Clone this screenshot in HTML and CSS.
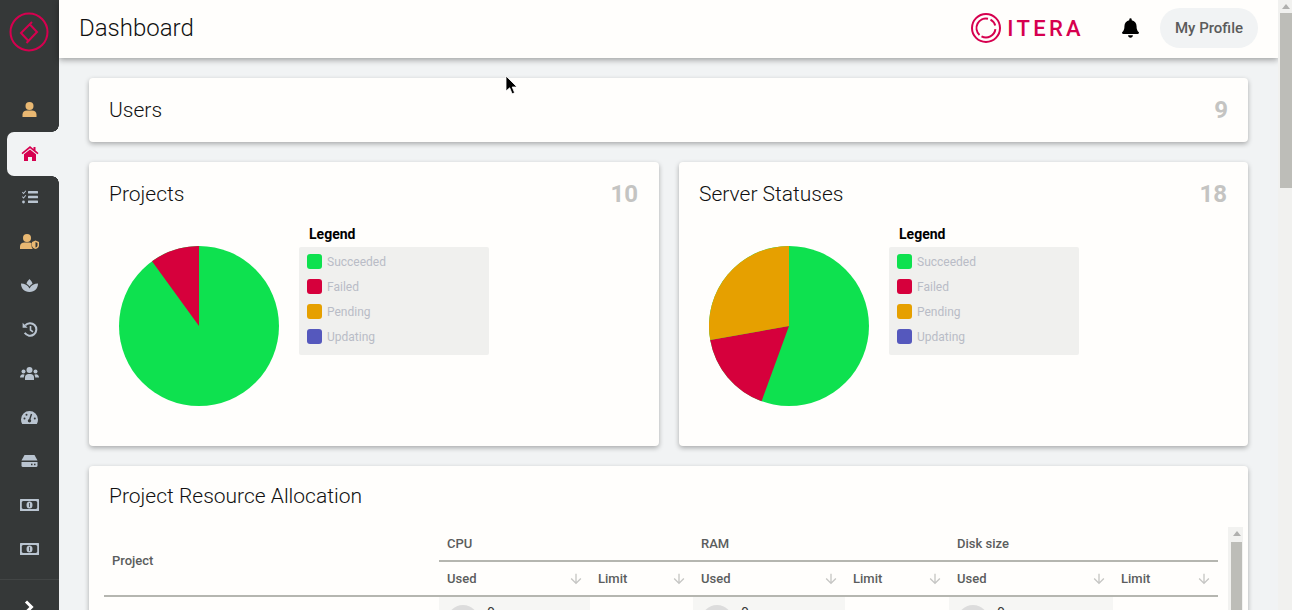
FILE: index.html
```html
<!DOCTYPE HTML>
<html>

<head>
  <meta charset="UTF-8"/>
  <title>Dashboard</title>
  <link rel="stylesheet" href="styles.css">
</head>

<body>
  <nav class="sidebar">
    <div class="side-logo">
      <svg width="40" height="40" viewBox="0 0 40 40" fill="none" stroke="#d6004f" stroke-width="2">
        <circle cx="20" cy="20" r="18.500"/>
        <path d="M23 10L12 21l7.500 8M17.500 31L28 20l-7.500-8"/>
      </svg>
    </div>
    <ul class="side-menu">
      <li class="side-item">
        <svg width="15" height="15" viewBox="0 0 15 15" fill="#e9b872"><circle cx="7.5" cy="4" r="4"/><path d="M0.5 15v-2.5C0.5 10 2.5 8.5 5 8.5h5c2.500 0 4.500 1.500 4.500 4V15z"/></svg>
      </li>
      <li class="side-item active">
        <svg width="18" height="15" viewBox="0 0 18 15" fill="#d6004f"><path d="M9 0L0.500 7l1 1.200L9 2.200l7.500 6 1-1.200-3-2.500V1h-2v1.900z"/><path d="M9 3.500L3 8.300V15h4v-4h4v4h4V8.300z"/></svg>
      </li>
      <li class="side-item">
        <svg width="16" height="14" viewBox="0 0 16 14" fill="#b9c4d0"><path d="M0.500 1.800l1 1 2-2.300.7.600L1.600 4.300 0 2.600zM0.500 6.300l1 1 2-2.300.7.600-2.600 3.200L0 7.100z"/><circle cx="1.500" cy="12" r="1.400"/><rect x="6" y="1" width="10" height="2.500" rx=".5"/><rect x="6" y="5.700" width="10" height="2.500" rx=".5"/><rect x="6" y="10.500" width="10" height="2.500" rx=".5"/></svg>
      </li>
      <li class="side-item">
        <svg width="19" height="15" viewBox="0 0 19 15" fill="#e9b872"><circle cx="7" cy="4" r="4"/><path d="M0 15v-2.500C0 10 2 8.500 4.500 8.500h5c.8 0 1.500.2 2.100.5v3c0 1.200.5 2.300 1.400 3z"/><path d="M15.500 6.500L12 8v3.500c0 1.800 1.500 3 3.500 3.500 2-.5 3.500-1.700 3.500-3.500V8z"/><path d="M15.500 8v5.500c1.200-.4 2-1.200 2-2.300V8.900z" fill="#353838"/></svg>
      </li>
      <li class="side-item">
        <svg width="17" height="13" viewBox="0 0 17 13" fill="#b9c4d0"><path d="M8.500 0C7 1.500 5.800 3.200 5.500 4.700 6.800 5.400 7.800 6.300 8.500 7.400 9.200 6.300 10.200 5.400 11.500 4.700 11.200 3.200 10 1.500 8.500 0z"/><path d="M0 4.500c0 4.500 3 8.500 8.500 8.500S17 9 17 4.500c-3.500 0-7 1.800-8.500 5C7 6.300 3.500 4.500 0 4.500z"/></svg>
      </li>
      <li class="side-item">
        <svg width="16" height="15" viewBox="0 0 16 15" fill="none" stroke="#b9c4d0" stroke-width="2"><path d="M3.200 3.400A6.300 6.300 0 1 1 2.700 10.800"/><path d="M8.500 4v4l2.500 1.800" stroke-width="1.600"/><path d="M0.600 0.800l0 5 5 0z" fill="#b9c4d0" stroke="none"/></svg>
      </li>
      <li class="side-item">
        <svg width="19" height="13" viewBox="0 0 19 13" fill="#b9c4d0"><circle cx="9.500" cy="3" r="3"/><circle cx="3.500" cy="4.500" r="2"/><circle cx="15.500" cy="4.500" r="2"/><path d="M5 13v-2.500C5 8.500 6.500 7 8.500 7h2c2 0 3.500 1.500 3.500 3.500V13z"/><path d="M0 10.500C0 8.500 1.200 7.200 3 7.200c.7 0 1.300.2 1.700.5C4 8.500 3.800 9.500 3.800 10.500z"/><path d="M19 10.500c0-2-1.200-3.300-3-3.300-.7 0-1.300.2-1.700.5.7.8.900 1.800.900 2.800z"/></svg>
      </li>
      <li class="side-item">
        <svg width="17" height="13" viewBox="0 0 17 13"><path d="M8.500 0A8.500 8.500 0 0 0 0 8.500c0 1.700.4 3.200 1.200 4.500h14.600c.8-1.300 1.200-2.800 1.200-4.500A8.500 8.500 0 0 0 8.500 0z" fill="#b9c4d0"/><path d="M10.500 3L8.700 8.500" stroke="#353838" stroke-width="1.400"/><circle cx="8.500" cy="9.800" r="1.700" fill="#353838"/><circle cx="3.500" cy="7.500" r="1" fill="#353838"/><circle cx="5.500" cy="3.800" r="1" fill="#353838"/><circle cx="13.800" cy="7.500" r="1" fill="#353838"/></svg>
      </li>
      <li class="side-item">
        <svg width="17" height="12" viewBox="0 0 17 12" fill="#b9c4d0"><path d="M3.500 0h10l3 5.500H.5z"/><path d="M.5 7h16v3.500a1.500 1.500 0 0 1-1.500 1.500H2A1.500 1.500 0 0 1 .5 10.500z"/><rect x="10" y="8.700" width="1.500" height="1.500" fill="#353838"/><rect x="13" y="8.700" width="1.500" height="1.500" fill="#353838"/></svg>
      </li>
      <li class="side-item">
        <svg width="19" height="12" viewBox="0 0 19 12"><rect width="19" height="12" rx=".5" fill="#b9c4d0"/><path d="M2.800 2h13.400a2 2 0 0 0 1 1v6a2 2 0 0 0-1 1H2.800a2 2 0 0 0-1-1V3a2 2 0 0 0 1-1z" fill="#353838"/><ellipse cx="9.500" cy="6" rx="3" ry="3.600" fill="#b9c4d0"/><rect x="9.100" y="4" width=".8" height="4" fill="#353838"/></svg>
      </li>
      <li class="side-item">
        <svg width="19" height="12" viewBox="0 0 19 12"><rect width="19" height="12" rx=".5" fill="#b9c4d0"/><path d="M2.800 2h13.400a2 2 0 0 0 1 1v6a2 2 0 0 0-1 1H2.800a2 2 0 0 0-1-1V3a2 2 0 0 0 1-1z" fill="#353838"/><ellipse cx="9.500" cy="6" rx="3" ry="3.600" fill="#b9c4d0"/><rect x="9.100" y="4" width=".8" height="4" fill="#353838"/></svg>
      </li>
    </ul>
    <div class="side-toggle">
      <svg width="10" height="14" viewBox="0 0 10 14" fill="none" stroke="#fff" stroke-width="3"><path d="M2 1.500L7.500 7 2 12.500"/></svg>
    </div>
  </nav>

  <div class="content">
    <header class="topbar">
      <h1 class="page-title">Dashboard</h1>
      <div class="brand">
        <svg width="30" height="30" viewBox="0 0 30 30" fill="none" stroke="#d6004f" stroke-width="2">
          <circle cx="15" cy="15" r="14"/>
          <path d="M17 5.700A9.500 9.500 0 0 0 8.500 21.900"/>
          <path d="M10.500 23.400A9.500 9.500 0 0 0 24.400 16.200"/>
          <path d="M19.500 6.600A9.500 9.500 0 0 1 24.200 12.500"/>
        </svg>
        <span class="brand-name">ITERA</span>
      </div>
      <svg class="bell" width="17" height="20" viewBox="0 0 448 512" fill="#000"><path d="M224 512c35 0 64-29 64-64H160c0 35 29 64 64 64zm215-150c-19-21-55-52-55-154 0-78-54-140-128-155V32a32 32 0 0 0-64 0v21C118 68 64 130 64 208c0 102-36 133-55 154-6 6-9 14-9 22 0 16 13 32 32 32h384c19 0 32-16 32-32 0-8-3-16-9-22z"/></svg>
      <button class="profile-btn">My Profile</button>
    </header>

    <main class="main">
      <section class="card users-card">
        <h2 class="card-title">Users</h2>
        <span class="card-count">9</span>
      </section>

      <div class="chart-row">
        <section class="card chart-card">
          <div class="card-head">
            <h2 class="card-title">Projects</h2>
            <span class="card-count">10</span>
          </div>
          <div class="chart-body">
            <svg class="pie" width="160" height="160" viewBox="-80 -80 160 160">
              <circle r="80" fill="#0ee14f"/>
              <path d="M0 0L-47 -64.700A80 80 0 0 1 0 -80Z" fill="#d6003c"/>
            </svg>
            <div class="legend">
              <div class="legend-title">Legend</div>
              <ul class="legend-list">
                <li class="legend-item"><span class="swatch succeeded"></span>Succeeded</li>
                <li class="legend-item"><span class="swatch failed"></span>Failed</li>
                <li class="legend-item"><span class="swatch pending"></span>Pending</li>
                <li class="legend-item"><span class="swatch updating"></span>Updating</li>
              </ul>
            </div>
          </div>
        </section>

        <section class="card chart-card">
          <div class="card-head">
            <h2 class="card-title">Server Statuses</h2>
            <span class="card-count">18</span>
          </div>
          <div class="chart-body">
            <svg class="pie" width="160" height="160" viewBox="-80 -80 160 160">
              <circle r="80" fill="#0ee14f"/>
              <path d="M0 0L-27.400 75.200A80 80 0 0 1 -78.800 13.900Z" fill="#d6003c"/>
              <path d="M0 0L-78.800 13.900A80 80 0 0 1 0 -80Z" fill="#e6a000"/>
            </svg>
            <div class="legend">
              <div class="legend-title">Legend</div>
              <ul class="legend-list">
                <li class="legend-item"><span class="swatch succeeded"></span>Succeeded</li>
                <li class="legend-item"><span class="swatch failed"></span>Failed</li>
                <li class="legend-item"><span class="swatch pending"></span>Pending</li>
                <li class="legend-item"><span class="swatch updating"></span>Updating</li>
              </ul>
            </div>
          </div>
        </section>
      </div>

      <section class="card alloc-card">
        <h2 class="card-title">Project Resource Allocation</h2>
        <div class="table-wrap">
          <div class="alloc-table">
            <div class="th th-project">Project</div>
            <div class="th th-group g-cpu">CPU</div>
            <div class="th th-group g-ram">RAM</div>
            <div class="th th-group g-disk">Disk size</div>
            <div class="th th-sub">Used<svg class="sort" width="16" height="16" viewBox="0 0 24 24"><path d="M20 12l-1.410-1.410L13 16.170V4h-2v12.170l-5.580-5.590L4 12l8 8 8-8z"/></svg></div>
            <div class="th th-sub">Limit<svg class="sort" width="16" height="16" viewBox="0 0 24 24"><path d="M20 12l-1.410-1.410L13 16.170V4h-2v12.170l-5.580-5.590L4 12l8 8 8-8z"/></svg></div>
            <div class="th th-sub">Used<svg class="sort" width="16" height="16" viewBox="0 0 24 24"><path d="M20 12l-1.410-1.410L13 16.170V4h-2v12.170l-5.580-5.590L4 12l8 8 8-8z"/></svg></div>
            <div class="th th-sub">Limit<svg class="sort" width="16" height="16" viewBox="0 0 24 24"><path d="M20 12l-1.410-1.410L13 16.170V4h-2v12.170l-5.580-5.590L4 12l8 8 8-8z"/></svg></div>
            <div class="th th-sub">Used<svg class="sort" width="16" height="16" viewBox="0 0 24 24"><path d="M20 12l-1.410-1.410L13 16.170V4h-2v12.170l-5.580-5.590L4 12l8 8 8-8z"/></svg></div>
            <div class="th th-sub">Limit<svg class="sort" width="16" height="16" viewBox="0 0 24 24"><path d="M20 12l-1.410-1.410L13 16.170V4h-2v12.170l-5.580-5.590L4 12l8 8 8-8z"/></svg></div>
            <div class="td"></div>
            <div class="td used"><span class="gauge"></span>0</div>
            <div class="td"></div>
            <div class="td used"><span class="gauge"></span>0</div>
            <div class="td"></div>
            <div class="td used"><span class="gauge"></span>0</div>
            <div class="td"></div>
          </div>
          <div class="table-scroll"><span class="scroll-up small"></span><span class="scroll-thumb"></span></div>
        </div>
      </section>
    </main>

    <div class="page-scroll"><span class="scroll-up"></span><span class="scroll-thumb"></span></div>
  </div>

  <svg class="cursor" width="13" height="20" viewBox="0 0 13 20"><path d="M1 1v15l3.700-3.200 2.400 6 2.500-1L7.200 12H12z" fill="#000" stroke="#fff" stroke-width=".8"/></svg>
</body>

</html>
```

FILE: styles.css
```css
* {
  box-sizing: border-box;
}

html, body {
  height: 100%;
}

body {
  margin: 0;
  display: flex;
  height: 610px;
  overflow: hidden;
  background-color: #F1F3F4;
  color: #111;
  font-family: Roboto, "Liberation Sans", sans-serif;
}

h1, h2, ul {
  margin: 0;
  padding: 0;
  font-weight: 400;
}

ul {
  list-style: none;
}

/* sidebar */
.sidebar {
  width: 59px;
  flex: none;
  height: 610px;
  background-color: #353838;
  display: flex;
  flex-direction: column;
}

.side-logo {
  height: 88px;
  padding: 12px 0 0 9px;
}

.side-menu {
  flex: 1;
}

.side-item {
  height: 44px;
  display: flex;
  align-items: center;
  justify-content: center;
  margin-left: 7px;
  padding: 0 7px 2px 0;
}

.side-item.active {
  background-color: #F1F3F4;
  border-radius: 7px 0 0 7px;
  position: relative;
}

.side-item.active::before,
.side-item.active::after {
  content: "";
  position: absolute;
  right: 0;
  width: 7px;
  height: 7px;
}

.side-item.active::before {
  top: -7px;
  background: radial-gradient(circle at 0 0, #353838 6.500px, #F1F3F4 7px);
}

.side-item.active::after {
  bottom: -7px;
  background: radial-gradient(circle at 0 100%, #353838 6.500px, #F1F3F4 7px);
}

.side-toggle {
  height: 31px;
  border-top: 1px solid #424545;
  padding: 19px 0 0 24px;
}

/* top bar */
.content {
  flex: 1;
  min-width: 0;
  position: relative;
}

.topbar {
  height: 58px;
  margin-right: 14px;
  background-color: #FFFEFC;
  box-shadow: 0 2px 6px rgba(0, 0, 0, .35);
  display: flex;
  align-items: center;
  padding: 0 20px 2px 20px;
  position: relative;
}

.page-title {
  font-size: 24px;
  font-weight: 300;
  flex: 1;
}

.brand {
  display: flex;
  align-items: center;
  gap: 6px;
  margin-right: 38px;
}

.brand-name {
  color: #d6004f;
  font-size: 22px;
  font-weight: 500;
  letter-spacing: 3.300px;
}

.bell {
  margin-right: 21px;
}

.profile-btn {
  width: 98px;
  height: 40px;
  border: 0;
  border-radius: 20px;
  background-color: #F1F3F4;
  color: #5b5b5b;
  font: 500 15px Roboto, sans-serif;
}

/* cards */
.main {
  padding: 20px 44px 0 30px;
}

.card {
  background-color: #FFFEFC;
  border-radius: 4px;
  box-shadow: 0 2px 5px rgba(0, 0, 0, .3);
}

.card-title {
  font-size: 21px;
  font-weight: 300;
}

.card-count {
  font-size: 24px;
  font-weight: 700;
  color: #c4c4c2;
}

.users-card {
  height: 64px;
  display: flex;
  align-items: center;
  justify-content: space-between;
  padding: 0 20px;
}

.chart-row {
  display: grid;
  grid-template-columns: 570px 569px;
  gap: 20px;
  margin: 20px 0;
}

.chart-card {
  height: 284px;
  padding: 20px;
}

.card-head {
  display: flex;
  justify-content: space-between;
  align-items: center;
  height: 24px;
  padding-right: 1px;
}

.chart-body {
  display: flex;
  padding: 0 0 0 10px;
  margin-top: 16px;
  gap: 20px;
}

.pie {
  margin-top: 24px;
}

.legend {
  width: 190px;
}

.legend-title {
  font-size: 14px;
  font-weight: 700;
  color: #000;
  padding-left: 10px;
  height: 25px;
  line-height: 24px;
}

.legend-list {
  background-color: #F0F0EE;
  border-radius: 2px;
  height: 108px;
  padding: 2px 8px;
}

.legend-item {
  height: 25px;
  display: flex;
  align-items: center;
  gap: 5px;
  font-size: 12px;
  color: #b9bcc6;
}

.swatch {
  width: 15px;
  height: 15px;
  border-radius: 3px;
}

.succeeded { background-color: #0ee14f; }
.failed { background-color: #d6003c; }
.pending { background-color: #e6a000; }
.updating { background-color: #5558bd; }

/* table */
.alloc-card {
  height: 200px;
  padding: 18px 5px 0 15px;
}

.alloc-card .card-title {
  padding-left: 5px;
  height: 24px;
  line-height: 24px;
}

.table-wrap {
  display: flex;
  margin-top: 20px;
}

.alloc-table {
  width: 1114px;
  display: grid;
  grid-template-columns: 335px 151px 103px 152px 104px 164px 105px;
  grid-template-rows: 34px 35px 40px;
  font-size: 13px;
  color: #5b5d5d;
}

.th {
  font-weight: 500;
  display: flex;
  align-items: center;
  justify-content: space-between;
  padding: 0 8px;
}

.th-project {
  grid-row: 1 / 3;
  grid-column: 1;
  border-bottom: 2px solid #b5b6b0;
  padding-bottom: 2px;
}

.th-group {
  border-bottom: 2px solid #b5b6b0;
  padding-bottom: 2px;
}

.g-cpu { grid-column: 2 / 4; }
.g-ram { grid-column: 4 / 6; }
.g-disk { grid-column: 6 / 8; }

.th-sub {
  border-bottom: 2px solid #b5b6b0;
}

.sort {
  fill: #c6c6c4;
  flex: none;
  margin-right: -2px;
}

.td.used {
  background-color: #F6F6F4;
  padding: 8px 0 0 8px;
  display: flex;
  gap: 8px;
  font-size: 14px;
  color: #333;
}

.gauge {
  width: 32px;
  height: 32px;
  border-radius: 50%;
  background-color: #dcdcdc;
  flex: none;
}

.table-scroll {
  width: 15px;
  margin-left: 10px;
  background-color: #F2F2F0;
  margin-top: -1px;
  padding: 0 1px 0 3px;
}

.page-scroll {
  position: absolute;
  top: 0;
  right: 0;
  width: 14px;
  height: 610px;
  background-color: #F1F1EF;
  padding-left: 2px;
}

.scroll-up {
  display: block;
  height: 13px;
  position: relative;
}

.scroll-up::before {
  content: "";
  position: absolute;
  left: 2px;
  top: 4px;
  border-left: 4px solid transparent;
  border-right: 4px solid transparent;
  border-bottom: 5px solid #b0b0ae;
}

.scroll-up.small {
  height: 15px;
}

.scroll-thumb {
  display: block;
  height: 175px;
  background-color: #BDBDB8;
}

.cursor {
  position: absolute;
  left: 505px;
  top: 75px;
}
```
